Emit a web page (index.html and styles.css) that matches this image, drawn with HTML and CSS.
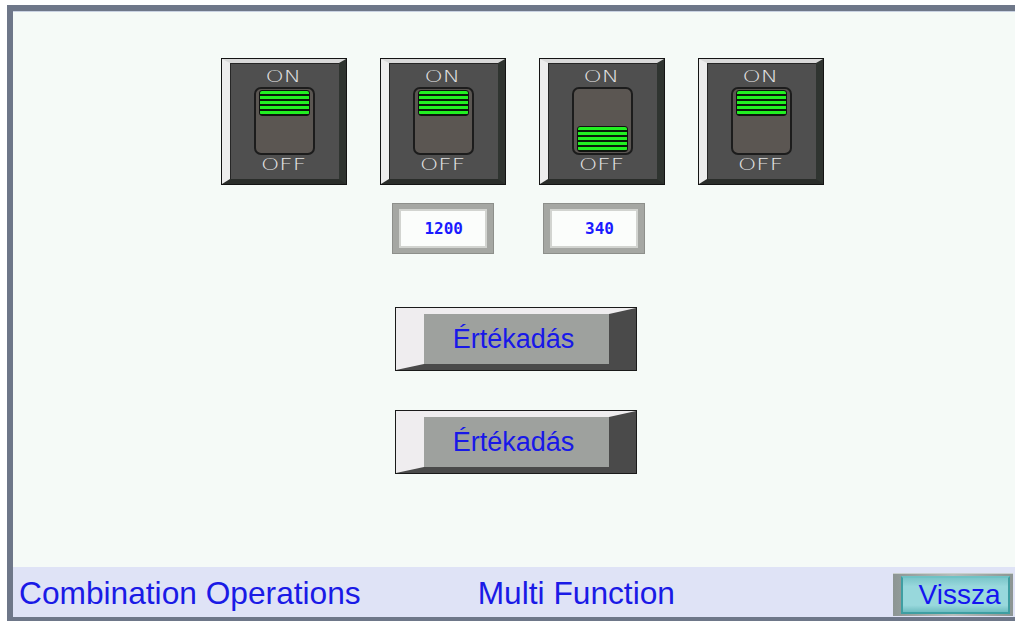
FILE: index.html
```html
<!DOCTYPE html>
<html>
<head>
<meta charset="utf-8">
<link rel="stylesheet" href="styles.css">
</head>
<body>
<div class="screen">
  <div class="main">
    <div class="switch-row">
      <div class="sw"><div class="sw-face">
        <div class="lbl lbl-on"><span>ON</span></div>
        <div class="rocker"><div class="led"></div></div>
        <div class="lbl lbl-off"><span>OFF</span></div>
      </div></div>
      <div class="sw"><div class="sw-face">
        <div class="lbl lbl-on"><span>ON</span></div>
        <div class="rocker"><div class="led"></div></div>
        <div class="lbl lbl-off"><span>OFF</span></div>
      </div></div>
      <div class="sw"><div class="sw-face">
        <div class="lbl lbl-on"><span>ON</span></div>
        <div class="rocker rocker-off"><div class="led"></div></div>
        <div class="lbl lbl-off"><span>OFF</span></div>
      </div></div>
      <div class="sw"><div class="sw-face">
        <div class="lbl lbl-on"><span>ON</span></div>
        <div class="rocker"><div class="led"></div></div>
        <div class="lbl lbl-off"><span>OFF</span></div>
      </div></div>
    </div>
    <div class="num-row">
      <div class="num"><div class="num-in">1200</div></div>
      <div class="num"><div class="num-in">340</div></div>
    </div>
    <div class="btn"><div class="btn-face">Értékadás</div></div>
    <div class="btn btn2"><div class="btn-face">Értékadás</div></div>
  </div>
  <div class="footer">
    <span class="ft-title">Combination Operations</span>
    <span class="ft-sub">Multi Function</span>
    <div class="back"><div class="back-face">Vissza</div></div>
  </div>
</div>
</body>
</html>
```

FILE: styles.css
```css
html, body {
  margin: 0;
  padding: 0;
  background: #ffffff;
}
body {
  width: 1015px;
  height: 621px;
  overflow: hidden;
  font-family: "Liberation Sans", Arial, sans-serif;
}
.screen {
  margin: 5px 0 0 7px;
  width: 1008px;
  height: 616px;
  box-sizing: border-box;
  border-left: 6px solid #6e7789;
  border-top: 6px solid #6e7789;
  border-bottom: 4px solid #6e7789;
  background: #f5faf7;
  display: flex;
  flex-direction: column;
}
.main {
  flex: 1;
  display: flex;
  flex-direction: column;
  border-top: 1px solid #c9d2e2;
}
.switch-row {
  display: flex;
  gap: 33px;
  padding-left: 208px;
  margin-top: 46px;
}
.sw {
  width: 126px;
  height: 127px;
  box-sizing: border-box;
  border: 1px solid #141414;
}
.sw-face {
  height: 100%;
  box-sizing: border-box;
  border-left: 8px solid #ededed;
  border-top: 4px solid #d9d9d9;
  border-right: 7px solid #2f3430;
  border-bottom: 5px solid #2a2d2a;
  background: #4f4f4f;
  box-shadow: inset 1px 1px 0 #262626;
  display: flex;
  flex-direction: column;
  align-items: center;
}
.lbl {
  font-family: "DejaVu Sans", sans-serif;
  font-weight: 200;
  font-size: 16px;
  color: #e4e4e4;
  line-height: 16px;
  text-align: center;
}
.lbl span {
  display: inline-block;
  transform: scaleX(1.45);
}
.lbl-on {
  margin-top: 6px;
  height: 18px;
  margin-left: -2px;
}
.lbl-off {
  margin-top: 2px;
  margin-left: -2px;
}
.rocker {
  width: 61px;
  height: 68px;
  box-sizing: border-box;
  border: 2px solid #1c1c1c;
  border-radius: 7px;
  background: #5b5652;
  display: flex;
  flex-direction: column;
  align-items: center;
  padding-top: 1px;
}
.rocker-off {
  justify-content: flex-end;
  padding-top: 0;
  padding-bottom: 1px;
}
.led {
  width: 51px;
  height: 26px;
  box-sizing: border-box;
  border: 1px solid #111;
  border-radius: 3px;
  background: repeating-linear-gradient(to bottom, #22f022 0px, #22f022 3px, #0a1a0a 3px, #0a1a0a 5px);
}
.num-row {
  display: flex;
  gap: 49px;
  padding-left: 379px;
  margin-top: 18px;
}
.num {
  width: 102px;
  height: 51px;
  box-sizing: border-box;
  border: 1px solid #8d8f8b;
  background: #a5a7a3;
  padding: 5px 6px;
}
.num-in {
  height: 100%;
  box-sizing: border-box;
  border: 2px solid #d2d4d0;
  background: #fbfdfb;
  font-family: "DejaVu Sans Mono", monospace;
  font-weight: bold;
  font-size: 16px;
  color: #1a1aff;
  display: flex;
  align-items: center;
  justify-content: flex-end;
  padding-right: 22px;
}
.btn {
  margin-left: 382px;
  margin-top: 53px;
  width: 242px;
  height: 64px;
  box-sizing: border-box;
  border: 1px solid #1a1a1a;
}
.btn2 {
  margin-top: 39px;
}
.btn-face {
  height: 100%;
  box-sizing: border-box;
  border-left: 28px solid #efedef;
  border-top: 6px solid #efedef;
  border-right: 27px solid #4a4a4a;
  border-bottom: 6px solid #4a4a4a;
  background: #9ea19e;
  color: #1818e8;
  font-size: 27px;
  display: flex;
  align-items: center;
  justify-content: center;
  padding-right: 6px;
}
.footer {
  height: 50px;
  background: #dfe3f6;
  display: flex;
  align-items: center;
  color: #1a1ae6;
  font-size: 31.7px;
}
.ft-title {
  margin-left: 6px;
  margin-top: 2px;
}
.ft-sub {
  margin-left: 117px;
  margin-top: 2px;
}
.back {
  margin-left: auto;
  margin-right: 2px;
  margin-top: 4px;
  width: 120px;
  height: 43px;
  box-sizing: border-box;
  background: linear-gradient(to right, #8c9593, #b5bdbb 50%, #8c9593);
  padding: 2px 3px 2px 8px;
  border-top: 1px solid #c8cfcd;
}
.back-face {
  height: 100%;
  box-sizing: border-box;
  border: 2px solid #3e9ea2;
  border-top-color: #6fc2c5;
  background: linear-gradient(to bottom, #7cc6ca, #98d8dc 25%, #98d8dc 80%, #6fbdc1);
  color: #1414f0;
  font-size: 28px;
  display: flex;
  align-items: center;
  justify-content: center;
  padding-top: 1px;
  padding-left: 8px;
}
```
